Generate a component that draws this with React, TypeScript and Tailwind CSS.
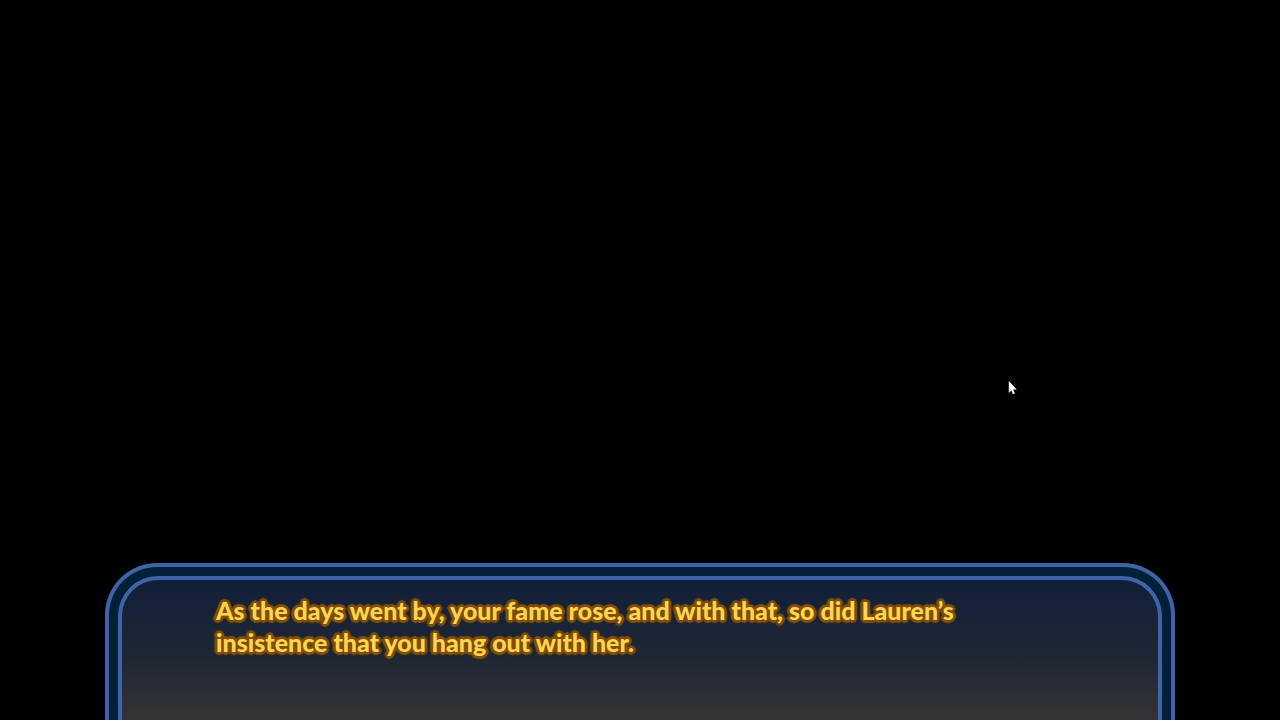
type DialogueBoxProps = {
  text: string
}

function DialogueBox({ text }: DialogueBoxProps) {
  return (
    <section
      aria-label="Dialogue"
      className="mx-[105px] rounded-t-[52px] border-4 border-b-0 border-[#4064a8] bg-[#022038] px-[9px] pt-[9px]"
    >
      <div className="min-h-36 rounded-t-[40px] border-4 border-b-0 border-[#4064a8] bg-linear-to-b from-[#121f3a] from-0% via-[#1e2734] via-55% to-[#323234] to-95% pt-[14px] pr-44 pl-[94px]">
        <p className="font-[Lato,sans-serif] text-[25px] leading-8 font-black text-[#ffd54f] [text-shadow:3px_0_1px_#824f08,-3px_0_1px_#824f08,0_3px_1px_#824f08,0_-3px_1px_#824f08,2px_2px_1px_#824f08,-2px_2px_1px_#824f08,2px_-2px_1px_#824f08,-2px_-2px_1px_#824f08]">
          {text}
        </p>
      </div>
    </section>
  )
}

function Cursor() {
  return (
    <svg
      className="pointer-events-none absolute top-[380px] left-[1008px] h-4 w-[10px]"
      viewBox="0 0 10 16"
      aria-hidden="true"
    >
      <path
        d="M.8 1v12l2.6-2.4L5 14.2l1.8-.8-1.6-3.8h3.6z"
        fill="#fff"
      />
    </svg>
  )
}

export default function App() {
  return (
    <main className="relative flex min-h-screen flex-col justify-end overflow-hidden bg-black">
      <DialogueBox text="As the days went by, your fame rose, and with that, so did Lauren’s insistence that you hang out with her." />
      <Cursor />
    </main>
  )
}
